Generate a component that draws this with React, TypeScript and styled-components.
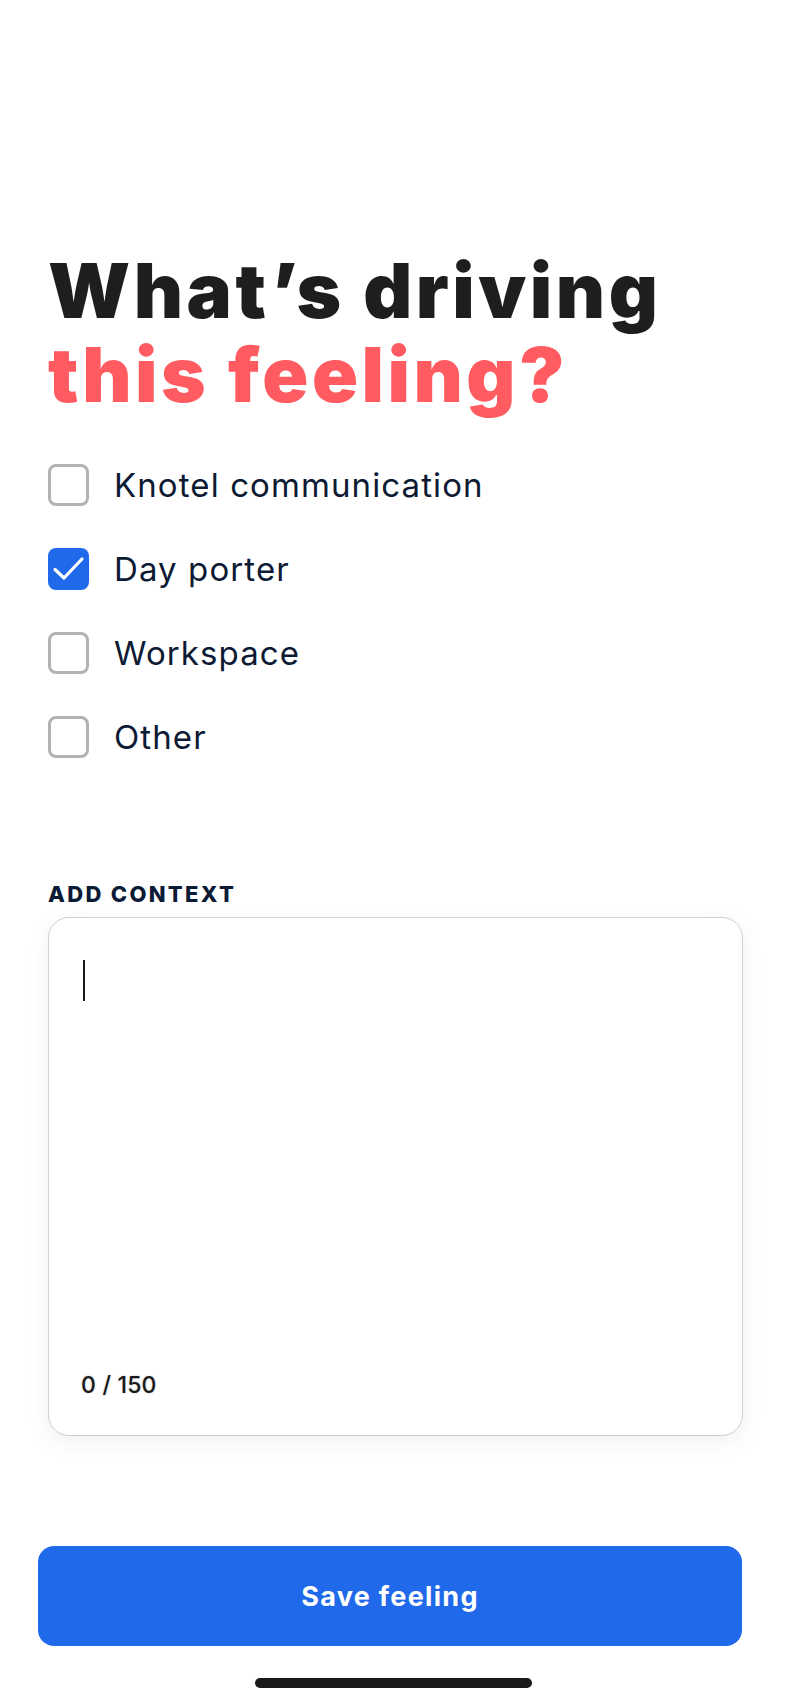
import React from "react";
import styled, { createGlobalStyle } from "styled-components";

const GlobalStyle = createGlobalStyle`
  body {
    margin: 0;
    background: #ffffff;
    font-family: Inter, "Noto Sans", sans-serif;
  }
`;

const Page = styled.div`
  width: 786px;
  height: 1700px;
  box-sizing: border-box;
  padding: 248px 43px 0 48px;
  display: flex;
  flex-direction: column;
`;

const Title = styled.h1`
  margin: 0;
  font-family: Inter, sans-serif;
  font-weight: 900;
  font-size: 76px;
  line-height: 84px;
  letter-spacing: 3.5px;
  color: #1e1e20;
`;

const Accent = styled.span`
  display: block;
  color: #ff5b60;
`;

const OptionList = styled.div`
  margin-top: 48px;
  display: flex;
  flex-direction: column;
  gap: 42px;
`;

const OptionRow = styled.label`
  display: flex;
  align-items: center;
  height: 42px;
  gap: 25px;
  cursor: pointer;
`;

const Box = styled.span<{ checked: boolean }>`
  flex: none;
  width: 41px;
  height: 42px;
  box-sizing: border-box;
  border-radius: 8px;
  border: ${(p) => (p.checked ? "none" : "3px solid #b2b2b6")};
  background: ${(p) => (p.checked ? "#1f69ea" : "#ffffff")};
  display: flex;
  align-items: center;
  justify-content: center;
`;

const OptionText = styled.span`
  font-family: Inter, sans-serif;
  font-size: 33px;
  font-weight: 400;
  letter-spacing: 1.1px;
  color: #0d1a33;
`;

const FieldLabel = styled.div`
  margin-top: 126px;
  font-family: Inter, sans-serif;
  font-weight: 800;
  font-size: 22px;
  line-height: 21px;
  letter-spacing: 2.3px;
  color: #0b1a35;
`;

const TextBox = styled.div`
  margin-top: 12px;
  height: 519px;
  box-sizing: border-box;
  border: 1.5px solid #cfcfd4;
  border-radius: 21px;
  background: #ffffff;
  box-shadow: 0 6px 24px rgba(0, 0, 0, 0.06);
  padding: 42px 34px 36px;
  display: flex;
  flex-direction: column;
  justify-content: space-between;
`;

const Caret = styled.span`
  display: block;
  width: 2px;
  height: 41px;
  background: #1a1a1a;
`;

const Counter = styled.span`
  margin-left: -2px;
  font-family: Inter, sans-serif;
  font-size: 23px;
  font-weight: 500;
  letter-spacing: 0.2px;
  color: #1a1a1a;
  text-shadow: 0 0 2px rgba(0, 0, 0, 0.25);
`;

const SaveButton = styled.button`
  margin: 110px 1px 0 -10px;
  height: 100px;
  border: none;
  border-radius: 16px;
  background: #1f69ea;
  color: #ffffff;
  font-family: Inter, sans-serif;
  font-weight: 700;
  font-size: 27px;
  letter-spacing: 1.3px;
  cursor: pointer;
`;

const HomeBar = styled.div`
  margin: 32px auto 0;
  width: 277px;
  height: 10px;
  border-radius: 5px;
  background: #1a1a1a;
  transform: translateX(-2px);
`;

const Check = () => (
  <svg width="41" height="42" viewBox="0 0 41 42" fill="none">
    <path
      d="M7 21.5 L16 30 L34 11"
      stroke="#ffffff"
      strokeWidth="3.2"
      strokeLinecap="round"
      strokeLinejoin="round"
    />
  </svg>
);

const options = [
  { label: "Knotel communication", checked: false },
  { label: "Day porter", checked: true },
  { label: "Workspace", checked: false },
  { label: "Other", checked: false },
];

export default function App() {
  return (
    <>
      <GlobalStyle />
      <Page>
        <Title>
          What’s driving
          <Accent>this feeling?</Accent>
        </Title>
        <OptionList>
          {options.map((o) => (
            <OptionRow key={o.label}>
              <Box checked={o.checked}>{o.checked && <Check />}</Box>
              <OptionText>{o.label}</OptionText>
            </OptionRow>
          ))}
        </OptionList>
        <FieldLabel>ADD CONTEXT</FieldLabel>
        <TextBox>
          <Caret />
          <Counter>0 / 150</Counter>
        </TextBox>
        <SaveButton>Save feeling</SaveButton>
        <HomeBar />
      </Page>
    </>
  );
}
